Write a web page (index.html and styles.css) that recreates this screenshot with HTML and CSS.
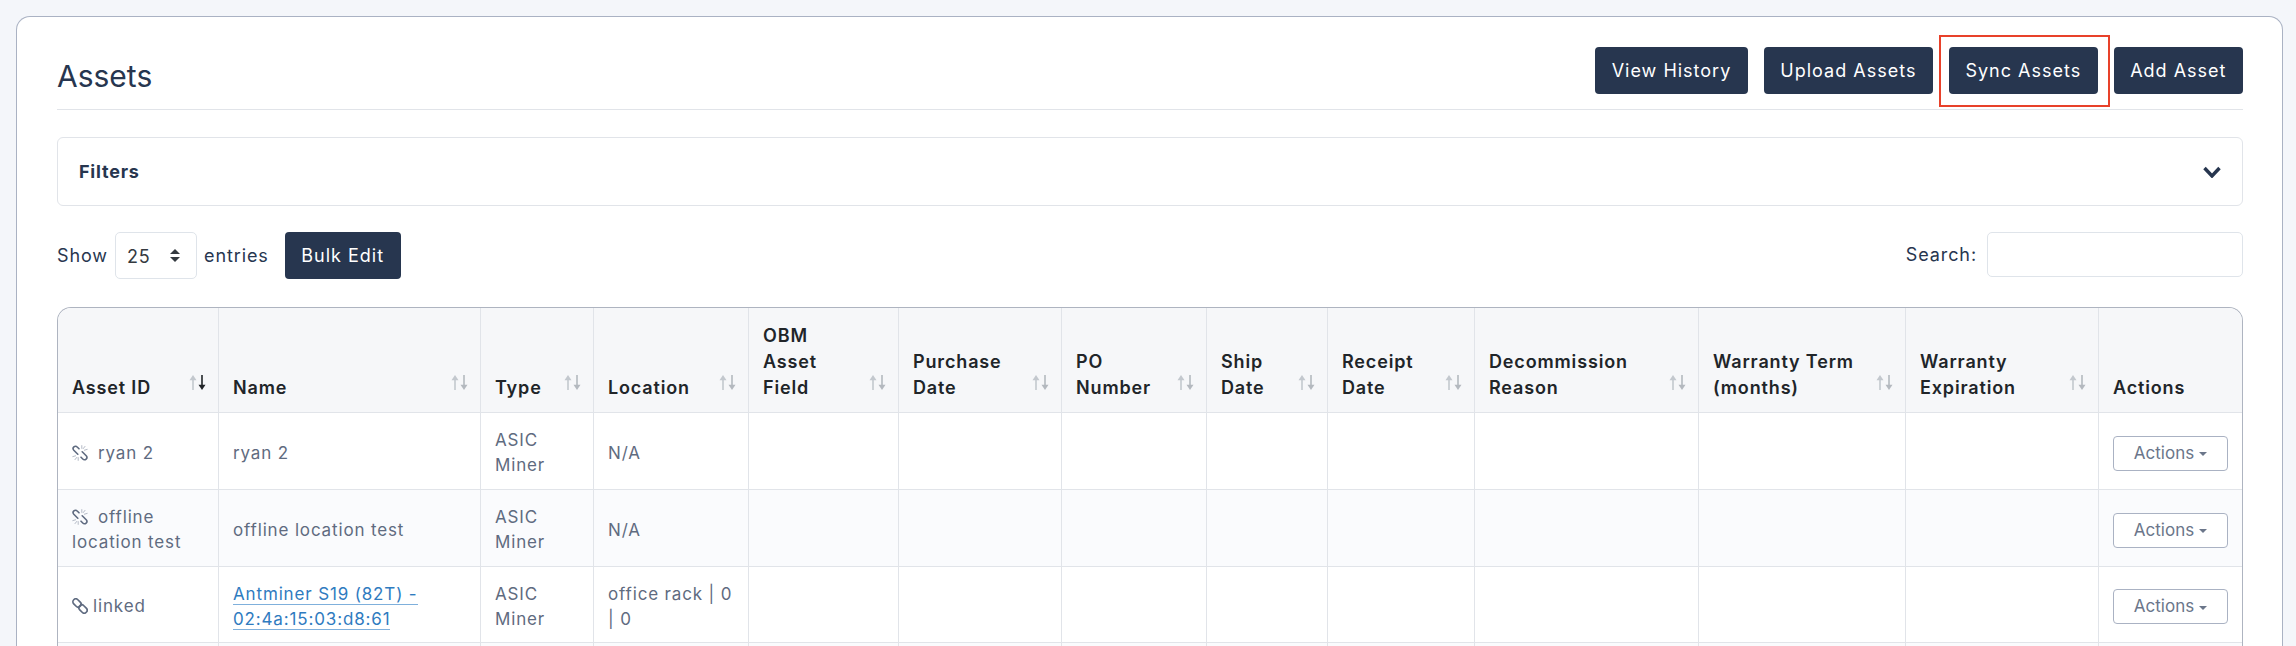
FILE: index.html
```html
<!DOCTYPE html>
<html lang="en">
<head>
<meta charset="utf-8">
<title>Assets</title>
<link rel="stylesheet" href="styles.css">
</head>
<body>
<svg class="defs" width="0" height="0" aria-hidden="true">
  <defs>
    <symbol id="sort" viewBox="0 0 8 15">
      <path d="M4 15V4" fill="none" stroke="currentColor" stroke-width="1.6"/>
      <path d="M4 0L.5 5.2h7z" fill="currentColor"/>
    </symbol>
    <symbol id="broken" viewBox="0 0 16 16">
      <g fill="none" stroke="#5f6b80" stroke-width="1.6" stroke-linecap="round">
        <path d="M7 3.8L5.2 2A2.3 2.3 0 0 0 1.8 5.2L5.8 9.2"/>
        <path d="M9 12.2L10.8 14a2.3 2.3 0 0 0 3.4-3.2L10.2 6.8"/>
      </g>
      <g fill="none" stroke="#b4bac6" stroke-width="1" stroke-linecap="round">
        <path d="M9.8 .6v2.8M13 1.4l-1.8 2.2M15.2 4.4l-2.8 .8"/>
        <path d="M6.2 15.4v-2.8M3 14.6l1.8-2.2M.8 11.6l2.8-.8"/>
      </g>
    </symbol>
    <symbol id="linked" viewBox="0 0 16 16">
      <g fill="none" stroke="#5f6b80" stroke-width="1.7">
        <rect x=".4" y="2.1" width="9.2" height="5.8" rx="2.9" transform="rotate(45 5 5)"/>
        <rect x="6.4" y="8.1" width="9.2" height="5.8" rx="2.9" transform="rotate(45 11 11)"/>
      </g>
    </symbol>
  </defs>
</svg>
<main class="card">
  <header class="page-head">
    <h1 class="page-title">Assets</h1>
    <div class="head-actions">
      <button class="btn">View History</button>
      <button class="btn">Upload Assets</button>
      <button class="btn btn-marked">Sync Assets<span class="annotation"></span></button>
      <button class="btn">Add Asset</button>
    </div>
  </header>

  <section class="filters">
    <span class="filters-label">Filters</span>
    <svg class="chevron" viewBox="0 0 18 12" aria-hidden="true"><path d="M1.5 2l7.5 8L16.5 2" fill="none" stroke="currentColor" stroke-width="3.4"/></svg>
  </section>

  <div class="toolbar">
    <div class="length">
      <span>Show</span>
      <span class="select-wrap">
        <select class="select"><option>25</option><option>50</option><option>100</option></select>
      </span>
      <span>entries</span>
      <button class="btn btn-bulk">Bulk Edit</button>
    </div>
    <label class="search">Search:<input class="search-input" type="search"></label>
  </div>

  <div class="table-wrap">
    <table class="table">
      <colgroup>
        <col class="c1"><col class="c2"><col class="c3"><col class="c4"><col class="c5"><col class="c6"><col class="c7">
        <col class="c8"><col class="c9"><col class="c10"><col class="c11"><col class="c12"><col class="c13">
      </colgroup>
      <thead>
        <tr>
          <th>Asset ID<span class="sort"><svg class="up"><use href="#sort"/></svg><svg class="down active"><use href="#sort"/></svg></span></th>
          <th>Name<span class="sort"><svg class="up"><use href="#sort"/></svg><svg class="down"><use href="#sort"/></svg></span></th>
          <th>Type<span class="sort"><svg class="up"><use href="#sort"/></svg><svg class="down"><use href="#sort"/></svg></span></th>
          <th>Location<span class="sort"><svg class="up"><use href="#sort"/></svg><svg class="down"><use href="#sort"/></svg></span></th>
          <th>OBM<br>Asset<br>Field<span class="sort"><svg class="up"><use href="#sort"/></svg><svg class="down"><use href="#sort"/></svg></span></th>
          <th>Purchase<br>Date<span class="sort"><svg class="up"><use href="#sort"/></svg><svg class="down"><use href="#sort"/></svg></span></th>
          <th>PO<br>Number<span class="sort"><svg class="up"><use href="#sort"/></svg><svg class="down"><use href="#sort"/></svg></span></th>
          <th>Ship<br>Date<span class="sort"><svg class="up"><use href="#sort"/></svg><svg class="down"><use href="#sort"/></svg></span></th>
          <th>Receipt<br>Date<span class="sort"><svg class="up"><use href="#sort"/></svg><svg class="down"><use href="#sort"/></svg></span></th>
          <th>Decommission<br>Reason<span class="sort"><svg class="up"><use href="#sort"/></svg><svg class="down"><use href="#sort"/></svg></span></th>
          <th>Warranty Term<br>(months)<span class="sort"><svg class="up"><use href="#sort"/></svg><svg class="down"><use href="#sort"/></svg></span></th>
          <th>Warranty<br>Expiration<span class="sort"><svg class="up"><use href="#sort"/></svg><svg class="down"><use href="#sort"/></svg></span></th>
          <th>Actions</th>
        </tr>
      </thead>
      <tbody>
        <tr>
          <td><svg class="chain chain-broken"><use href="#broken"/></svg>ryan 2</td>
          <td>ryan 2</td>
          <td>ASIC<br>Miner</td>
          <td>N/A</td>
          <td></td><td></td><td></td><td></td><td></td><td></td><td></td><td></td>
          <td><button class="btn-actions">Actions<span class="caret"></span></button></td>
        </tr>
        <tr class="alt">
          <td><svg class="chain chain-broken"><use href="#broken"/></svg>offline<br>location test</td>
          <td>offline location test</td>
          <td>ASIC<br>Miner</td>
          <td>N/A</td>
          <td></td><td></td><td></td><td></td><td></td><td></td><td></td><td></td>
          <td><button class="btn-actions">Actions<span class="caret"></span></button></td>
        </tr>
        <tr class="short">
          <td><svg class="chain"><use href="#linked"/></svg>linked</td>
          <td><a class="link" href="#">Antminer S19 (82T) -<br>02:4a:15:03:d8:61</a></td>
          <td>ASIC<br>Miner</td>
          <td>office rack | 0<br>| 0</td>
          <td></td><td></td><td></td><td></td><td></td><td></td><td></td><td></td>
          <td><button class="btn-actions">Actions<span class="caret"></span></button></td>
        </tr>
        <tr class="alt">
          <td>&nbsp;</td><td></td><td></td><td></td><td></td><td></td><td></td><td></td><td></td><td></td><td></td><td></td><td></td>
        </tr>
      </tbody>
    </table>
  </div>
</main>
</body>
</html>
```
FILE: styles.css
```css
* { box-sizing: border-box; }
html, body { margin: 0; height: 100%; overflow: hidden; }
body {
  background: #f4f6fa;
  padding: 16px 13px 0 16px;
  font-family: Inter, "Liberation Sans", sans-serif;
  font-size: 18px;
  letter-spacing: .9px;
  color: #27364f;
}
.defs { position: absolute; }
.card {
  background: #fff;
  border: 1px solid #aab2c3;
  border-bottom: 0;
  border-radius: 14px 14px 0 0;
  padding: 30px 39px 40px 40px;
}
.page-head {
  display: flex;
  justify-content: space-between;
  align-items: flex-start;
  height: 63px;
  border-bottom: 1px solid #e1e4e9;
}
.page-title { margin: 0; padding-top: 11px; font-size: 30px; line-height: 36px; font-weight: 400; letter-spacing: 0; }
.head-actions { display: flex; gap: 16px; }
.btn {
  height: 47px;
  padding: 0 16.5px;
  border: 0;
  border-radius: 4px;
  background: #27364f;
  color: #fff;
  font: inherit;
  letter-spacing: 1px;
  cursor: pointer;
}
.btn-marked { position: relative; }
.annotation {
  position: absolute;
  inset: -12px -12px -13px -10px;
  border: 2px solid #e8412a;
}
.filters {
  display: flex;
  align-items: center;
  justify-content: space-between;
  height: 69px;
  margin-top: 27px;
  padding: 0 21px;
  border: 1px solid #e1e4e9;
  border-radius: 6px;
}
.filters-label { font-weight: 700; letter-spacing: .8px; }
.chevron { width: 18px; height: 12px; color: #27364f; }
.toolbar {
  display: flex;
  justify-content: space-between;
  margin-top: 26px;
  height: 47px;
}
.length { display: flex; align-items: center; gap: 7px; }
.select-wrap { position: relative; display: block; width: 82px; height: 47px; }
.select-wrap::before, .select-wrap::after {
  content: "";
  position: absolute;
  left: 55px;
  border-left: 5.5px solid transparent;
  border-right: 5.5px solid transparent;
}
.select-wrap::before { top: 17px; border-bottom: 5.5px solid #343a40; }
.select-wrap::after { top: 25px; border-top: 5.5px solid #343a40; }
.select {
  appearance: none;
  width: 100%;
  height: 100%;
  padding: 2px 0 0 11px;
  border: 1px solid #dfe4ea;
  border-radius: 5px;
  background: #fff;
  color: #343a40;
  font: inherit;
  letter-spacing: .8px;
}
.btn-bulk { margin-left: 9px; }
.search { display: flex; align-items: flex-start; gap: 10px; line-height: 45px; }
.search-input {
  width: 256px;
  height: 45px;
  border: 1px solid #dfe4ea;
  border-radius: 5px;
  background: #fff;
}
.table-wrap {
  margin-top: 28px;
  border: 1px solid #aeb4c0;
  border-bottom: 0;
  border-radius: 14px 14px 0 0;
  overflow: hidden;
}
.table { width: 2185px; table-layout: fixed; border-collapse: separate; border-spacing: 0; }
.c1 { width: 161px; } .c2 { width: 262px; } .c3 { width: 113px; } .c4 { width: 155px; }
.c5 { width: 150px; } .c6 { width: 163px; } .c7 { width: 145px; } .c8 { width: 121px; }
.c9 { width: 147px; } .c10 { width: 224px; } .c11 { width: 207px; } .c12 { width: 193px; }
.c13 { width: 144px; }
th, td { border-right: 1px solid #e1e4e9; border-bottom: 1px solid #e1e4e9; }
th:last-child, td:last-child { border-right: 0; }
th {
  position: relative;
  height: 105px;
  padding: 0 14px 11px;
  background: #f6f7f9;
  color: #212529;
  font-weight: 600;
  font-size: 18px;
  letter-spacing: .85px;
  line-height: 26px;
  text-align: left;
  vertical-align: bottom;
  white-space: nowrap;
}
td {
  height: 77px;
  padding: 4px 14px 0;
  color: #5f6b80;
  font-size: 17px;
  letter-spacing: .85px;
  line-height: 25px;
  vertical-align: middle;
  white-space: nowrap;
}
.short td { height: 76px; }
.alt td { background: #fafbfd; }
.sort { position: absolute; right: 12px; bottom: 22px; display: flex; gap: 1px; }
.sort svg { width: 8px; height: 15px; flex: none; color: #c3c8ce; }
.sort .down { transform: rotate(180deg); color: #b4b9bf; }
.sort .active { color: #212529; }
.chain { width: 16px; height: 16px; vertical-align: -2px; margin-right: 5px; }
.chain-broken { margin-right: 10px; }
.link { color: #2f7bbf; text-decoration: none; border-bottom: 1px solid #7fb0dc; }
.btn-actions {
  display: inline-flex;
  align-items: center;
  justify-content: center;
  gap: 5px;
  width: 115px;
  height: 35px;
  padding: 0;
  border: 1px solid #aab2c3;
  border-radius: 4px;
  background: #fff;
  color: #6b768a;
  font: inherit;
  cursor: pointer;
}
.caret {
  border-left: 4.5px solid transparent;
  border-right: 4.5px solid transparent;
  border-top: 4.5px solid #6b768a;
  margin-top: 2px;
}
```
